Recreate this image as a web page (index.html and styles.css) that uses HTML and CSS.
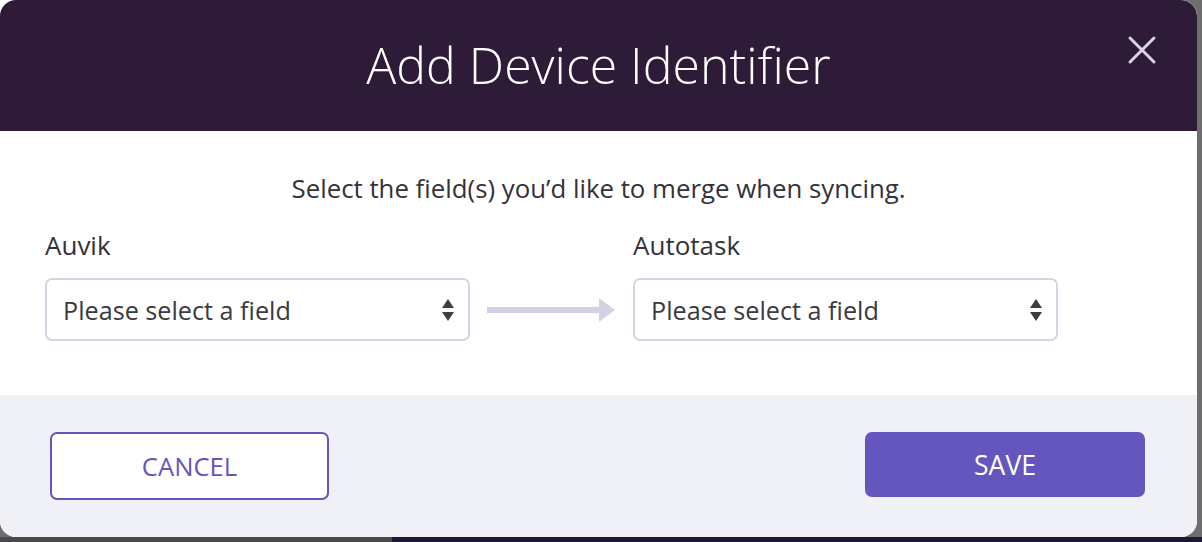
FILE: index.html
```html
<!DOCTYPE html>
<html lang="en">
<head>
<meta charset="utf-8">
<title>Add Device Identifier</title>
<link rel="stylesheet" href="styles.css">
</head>
<body>
<div class="backdrop">
  <div class="modal">
    <header class="modal-header">
      <h1 class="modal-title">Add Device Identifier</h1>
      <button class="close-btn" aria-label="Close">
        <svg width="30" height="30" viewBox="0 0 30 30"><path d="M3 3 L27 27 M27 3 L3 27" stroke="#d9d5e6" stroke-width="3" stroke-linecap="round"/></svg>
      </button>
    </header>
    <section class="modal-body">
      <p class="intro">Select the field(s) you’d like to merge when syncing.</p>
      <div class="mapping">
        <div class="field">
          <label class="field-label">Auvik</label>
          <div class="select">
            <span class="select-text">Please select a field</span>
            <svg class="select-arrows" width="12" height="22" viewBox="0 0 12 22"><path d="M6 0 L12 9 L0 9 Z M0 13 L12 13 L6 22 Z" fill="#3d3d44"/></svg>
          </div>
        </div>
        <div class="connector">
          <svg width="130" height="30" viewBox="0 0 130 30"><rect x="0" y="12" width="116" height="6" fill="#d3d1e3"/><path d="M112 3 L128 15 L112 27 Z" fill="#d3d1e3"/></svg>
        </div>
        <div class="field">
          <label class="field-label">Autotask</label>
          <div class="select">
            <span class="select-text">Please select a field</span>
            <svg class="select-arrows" width="12" height="22" viewBox="0 0 12 22"><path d="M6 0 L12 9 L0 9 Z M0 13 L12 13 L6 22 Z" fill="#3d3d44"/></svg>
          </div>
        </div>
      </div>
    </section>
    <footer class="modal-footer">
      <button class="btn btn-outline">CANCEL</button>
      <button class="btn btn-primary">SAVE</button>
    </footer>
  </div>
</div>
</body>
</html>
```

FILE: styles.css
```css
html, body {
  margin: 0;
  padding: 0;
}
body {
  width: 1202px;
  height: 542px;
  overflow: hidden;
  background: #6b6b6b;
  font-family: "Open Sans", "Noto Sans", sans-serif;
}
.backdrop {
  width: 1202px;
  height: 542px;
  background:
    linear-gradient(to right, transparent 0, transparent 392px, #1d1836 392px) bottom / 100% 5px no-repeat,
    linear-gradient(to bottom, #6e6e6e 0, #6e6e6e 537px, #4a4a4a 537px);
}
.modal {
  width: 1197px;
  height: 537px;
  border-radius: 0 16px 16px 16px;
  overflow: hidden;
  display: flex;
  flex-direction: column;
  background: #fff;
}
.modal-header {
  height: 131px;
  flex: none;
  background: #2e1b37;
  display: flex;
  align-items: center;
  justify-content: center;
  position: relative;
  border-radius: 16px 16px 0 0;
}
.modal-title {
  margin: 0 0 2px 0;
  color: #fff;
  font-weight: 300;
  font-size: 50px;
}
.close-btn {
  position: absolute;
  right: 40px;
  top: 35px;
  background: none;
  border: 0;
  padding: 0;
  width: 30px;
  height: 30px;
  cursor: pointer;
}
.modal-body {
  height: 264px;
  flex: none;
  box-sizing: border-box;
  padding: 0 45px;
}
.intro {
  margin: 0;
  padding-top: 39px;
  text-align: center;
  font-size: 25.8px;
  color: #333338;
  line-height: 36px;
}
.mapping {
  display: flex;
  align-items: flex-end;
  margin-top: 21px;
}
.field {
  width: 425px;
  display: flex;
  flex-direction: column;
}
.field-label {
  font-size: 26px;
  color: #333338;
  line-height: 36px;
  margin-bottom: 15px;
}
.select {
  height: 63px;
  box-sizing: border-box;
  border: 2px solid #d6d4e4;
  border-radius: 7px;
  display: flex;
  align-items: center;
  justify-content: space-between;
  padding: 0 14px 0 16px;
  background: #fff;
}
.select-text {
  font-size: 25.2px;
  color: #3a3a40;
}
.connector {
  width: 163px;
  height: 63px;
  display: flex;
  align-items: center;
  justify-content: center;
}
.modal-footer {
  flex: 1;
  background: #f0f1f6;
  display: flex;
  justify-content: space-between;
  align-items: flex-start;
  padding: 37px 52px 0 50px;
}
.btn {
  width: 279px;
  height: 68px;
  border-radius: 7px;
  font-family: "Open Sans", "Noto Sans", sans-serif;
  font-size: 25.6px;
  cursor: pointer;
  box-sizing: border-box;
}
.btn-outline {
  background: #fff;
  border: 2px solid #6556bd;
  color: #6556bd;
}
.btn-primary {
  background: #6556bd;
  border: 0;
  color: #fff;
  height: 65px;
  width: 280px;
  font-size: 26.5px;
}
```
